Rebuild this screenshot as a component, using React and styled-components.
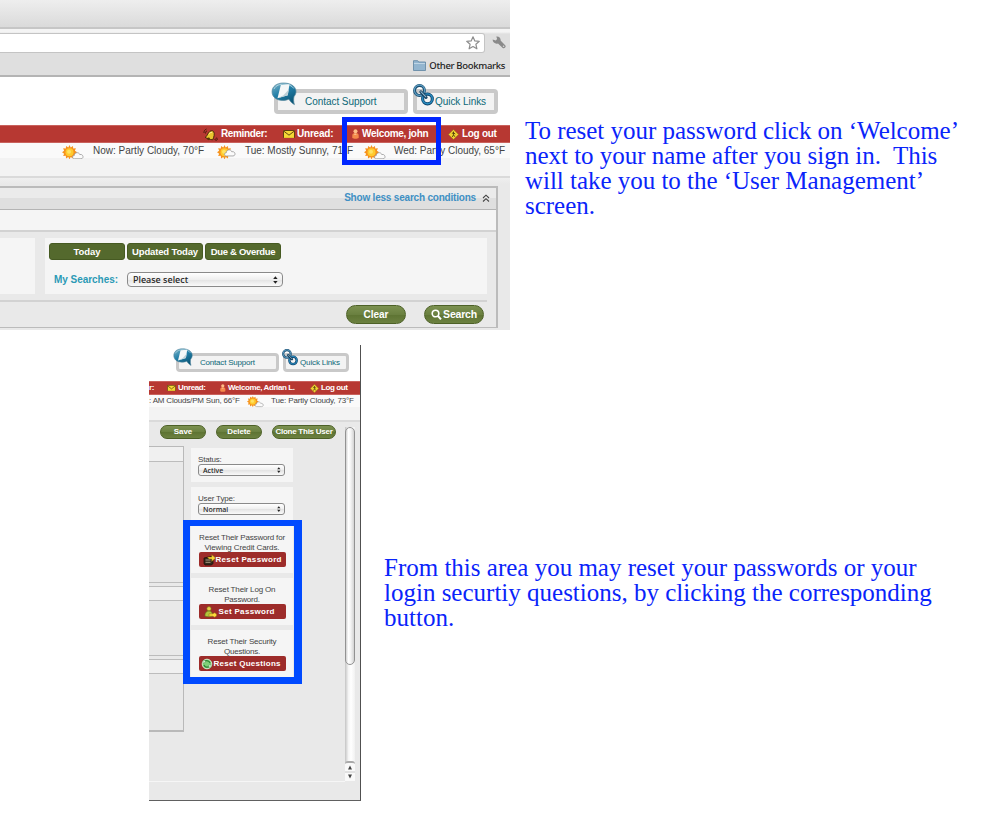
import React from "react";
import styled, { createGlobalStyle } from "styled-components";

const Global = createGlobalStyle`
  *, *::before, *::after { box-sizing: border-box; }
  body { margin: 0; background: #fff; }
  button { border: 0; padding: 0; margin: 0; font: inherit; }
`;

const Page = styled.main`
  width: 1000px;
  height: 816px;
  display: flex;
  flex-direction: column;
  gap: 15px;
  overflow: hidden;
  background: #fff;
  font-family: "Liberation Sans", Arial, sans-serif;
`;

const Step = styled.section`
  display: flex;
  align-items: flex-start;
  padding-left: ${(p) => p.$indent || 0}px;
`;

const Note = styled.p`
  margin: ${(p) => p.$top}px 0 0 ${(p) => p.$left}px;
  font: 25px/25px "Liberation Serif", "Times New Roman", serif;
  letter-spacing: ${(p) => p.$track || 0}px;
  color: #0a24fa;
  white-space: pre;
`;

const Text = styled.span`
  font-size: ${(p) => p.$size || 10}px;
  letter-spacing: ${(p) => p.$track || 0}px;
  font-weight: ${(p) => (p.$bold ? 700 : 400)};
  line-height: 1;
  white-space: nowrap;
`;

/* Screenshot frames */
const BrowserShot = styled.div`
  position: relative;
  flex: none;
  width: 510px;
  height: 330px;
  display: flex;
  flex-direction: column;
  overflow: hidden;
  background: #e9e9e9;
`;

const UserShot = styled.div`
  position: relative;
  flex: none;
  width: 212px;
  height: 456px;
  display: flex;
  flex-direction: column;
  overflow: hidden;
  background: #e9e9e9;
  border-right: 1px solid #505050;
  border-bottom: 1px solid #606060;
`;

const Highlight = styled.div`
  position: absolute;
  left: ${(p) => p.$x}px;
  top: ${(p) => p.$y}px;
  width: ${(p) => p.$w}px;
  height: ${(p) => p.$h}px;
  border-style: solid;
  border-color: ${(p) => p.$color};
  border-width: ${(p) => p.$border};
`;

/* Browser chrome */
const TabStrip = styled.div`
  flex: none;
  height: 29px;
  background: linear-gradient(#eeeeee, #dadada);
  border-bottom: 2px solid #c6c6c6;
`;

const Toolbar = styled.div`
  flex: none;
  height: 24px;
  display: flex;
  align-items: center;
  padding: 4px 4px 0 0;
  gap: 7px;
  background: linear-gradient(#f4f4f4 3px, #dfdfdf 5px);
`;

const AddressField = styled.div`
  width: 485px;
  height: 20px;
  display: flex;
  align-items: center;
  justify-content: flex-end;
  padding-right: 4px;
  background: #fff;
  border: solid #c4c4c4;
  border-width: 1px 1px 1px 0;
  border-radius: 0 3px 3px 0;
`;

const BookmarksBar = styled.div`
  flex: none;
  height: 24px;
  display: flex;
  align-items: center;
  justify-content: flex-end;
  gap: 3px;
  padding: 3px 5px 0 0;
  background: #dfdfdf;
  border-bottom: 2px solid #b4b4b4;
  color: #222;
  span { font-family: "Noto Sans", sans-serif; font-weight: 500; }
`;

/* Support header */
const SupportHeader = styled.header`
  flex: none;
  height: ${(p) => (p.$small ? 36 : 48)}px;
  display: flex;
  gap: ${(p) => (p.$small ? 4 : 5)}px;
  padding: ${(p) => (p.$small ? "8px 0 0 27px" : "12px 0 0 274px")};
  background: #fff;
`;

const SupportButton = styled.button`
  position: relative;
  width: ${(p) => p.$w}px;
  height: ${(p) => (p.$small ? 19 : 25)}px;
  display: flex;
  align-items: center;
  padding-left: ${(p) => p.$pad}px;
  background: #f3f3f3;
  border: ${(p) => (p.$small ? 3 : 4)}px solid #c9c9c9;
  border-radius: 4px;
  color: #0c6877;
`;

const Badge = styled.span`
  position: absolute;
  left: ${(p) => p.$x}px;
  top: ${(p) => p.$y}px;
  line-height: 0;
`;

/* Red account navigation and the weather strip beneath it */
const AccountBar = styled.nav`
  flex: none;
  height: ${(p) => (p.$small ? 14 : 18)}px;
  display: grid;
  grid-template-columns: ${(p) => p.$cols};
  align-items: center;
  background: #b73832;
  border: solid #c9625d;
  border-width: 1px 0;
  color: #fff;
`;

const NavItem = styled.div`
  display: grid;
  grid-template-columns: ${(p) => p.$icon}px auto;
  align-items: center;
  justify-content: start;
`;

const WeatherBar = styled.div`
  flex: none;
  height: ${(p) => (p.$small ? 27 : 35)}px;
  display: grid;
  grid-template-columns: ${(p) => p.$cols};
  align-items: start;
  padding-top: ${(p) => (p.$small ? 1 : 1.5)}px;
  background: linear-gradient(#fafafa ${(p) => (p.$small ? 12 : 15)}px, #f3f3f3 ${(p) => (p.$small ? 12 : 15)}px);
  border-bottom: 2px solid #dadada;
  color: #444;
  ${Text} { padding-top: 1px; }
`;

const Forecast = styled.div`
  display: grid;
  grid-template-columns: ${(p) => p.$icon}px auto;
  align-items: start;
  justify-content: start;
`;

/* Search panel */
const Workspace = styled.div`
  flex: 1;
  padding: 8px 12px 0 0;
  background: linear-gradient(#efefef, #e9e9e9 6px);
`;

const SearchPanel = styled.div`
  height: 142px;
  display: flex;
  flex-direction: column;
  border: solid #bbb;
  border-width: 2px 2px 1px 0;
  background: #e9e9e9;
`;

const PanelHead = styled.div`
  height: 22px;
  display: flex;
  align-items: center;
  justify-content: flex-end;
  gap: 6px;
  padding: 0 6px 1px 0;
  background: linear-gradient(#ebebeb 50%, #dfdfdf 50%);
  border-bottom: 1px solid #b4b4b4;
  color: #4090c4;
`;

const PanelStrip = styled.div`
  height: 22px;
  background: #f5f5f5;
  border-bottom: 2px solid #d2d2d2;
`;

const PanelBody = styled.div`
  height: 70px;
  display: flex;
  gap: 10px;
  padding: 6px 0 6px 0;
  border-bottom: 2px solid #d2d2d2;
  margin-right: 9px;
`;

const FilterSide = styled.div`
  width: 35px;
  background: #f5f5f5;
`;

const FilterMain = styled.div`
  flex: 1;
  display: flex;
  flex-direction: column;
  gap: 12px;
  padding: 5px 0 0 4px;
  background: #f5f5f5;
`;

const FilterRow = styled.div`
  display: flex;
  align-items: center;
  gap: 2px;
`;

const FilterTab = styled.button`
  width: 76px;
  height: 17px;
  display: flex;
  align-items: center;
  justify-content: center;
  background: #54692d;
  border: 1px solid #465a22;
  border-radius: 3px;
  color: #fff;
`;

const FieldLabel = styled.label`
  width: 76px;
  display: flex;
  padding-left: 5px;
  color: #2b9ab5;
`;

const Select = styled.div`
  width: ${(p) => p.$w}px;
  height: ${(p) => (p.$small ? 12 : 15)}px;
  display: flex;
  align-items: center;
  justify-content: space-between;
  padding: 0 ${(p) => (p.$small ? 3 : 4)}px 0 ${(p) => (p.$small ? 4 : 5)}px;
  background: linear-gradient(#fff, #efefef 50%, #e2e2e2 50%, #fafafa);
  border: 1px solid #8a8a8a;
  border-radius: ${(p) => (p.$small ? 3 : 4)}px;
  color: #222;
  ${Text} { font-family: "Noto Sans", sans-serif; font-weight: 500; }
`;

const PanelFooter = styled.div`
  flex: 1;
  display: flex;
  justify-content: flex-end;
  gap: 18px;
  padding: 3px 12px 0 0;
`;

const Pill = styled.button`
  width: ${(p) => p.$w}px;
  height: ${(p) => (p.$small ? 14 : 19)}px;
  display: flex;
  align-items: center;
  justify-content: center;
  gap: 1px;
  background: linear-gradient(#7c9150, #6a8040 50%, #5d7332 50%, #6c8141);
  border: ${(p) => (p.$small ? 1 : 1.5)}px solid #4d6127;
  border-radius: 10px;
  color: #fff;
`;

/* User management screen */
const Actions = styled.div`
  flex: none;
  height: 24px;
  display: flex;
  gap: 10px;
  padding: 3px 0 0 11px;
`;

const Content = styled.div`
  flex: 1;
  display: flex;
`;

const UserMain = styled.div`
  width: 196px;
  height: 336px;
  border-bottom: 1px solid #f6f6f6;
`;

const Columns = styled.div`
  display: flex;
  gap: 7px;
`;

const Sections = styled.div`
  width: 35px;
  height: 286px;
  border: solid #b9b9b9;
  border-width: 1px 1px 2px 0;
`;

const SectionBox = styled.div`
  height: ${(p) => p.$h}px;
  border-bottom: ${(p) => (p.$last ? 0 : 1)}px solid #bcbcbc;
  margin-bottom: 3px;
`;

const SectionHead = styled.div`
  height: ${(p) => p.$h}px;
  background: #f0f0f0;
  border: solid #bcbcbc;
  border-width: ${(p) => (p.$first ? 0 : 1)}px 0 1px;
`;

const Cards = styled.div`
  width: 102px;
  display: flex;
  flex-direction: column;
  gap: 5px;
  padding-top: 2px;
`;

const FieldCard = styled.div`
  height: 34px;
  display: flex;
  flex-direction: column;
  padding: 8px 0 0 7px;
  background: #f5f5f5;
  color: #444;
`;

const ResetCard = styled.div`
  height: 47px;
  display: flex;
  flex-direction: column;
  align-items: center;
  gap: 2px;
  padding-top: 8px;
  background: #f5f5f5;
  color: #444;
`;

const ResetButton = styled.button`
  width: 87px;
  height: 15px;
  display: flex;
  align-items: center;
  gap: ${(p) => p.$gap}px;
  padding-left: ${(p) => p.$pad}px;
  margin-top: -2px;
  background: #9d2c2a;
  border-radius: 2px;
  color: #fff;
  svg { flex: none; }
`;

const ScrollTrack = styled.div`
  width: 10px;
  height: 354px;
  display: flex;
  flex-direction: column;
  background: linear-gradient(90deg, #c4c4c4, #f5f5f5 35%, #fff 60%, #f1f1f1);
  margin-top: -19px;
`;

const ScrollThumb = styled.div`
  height: 238px;
  background: linear-gradient(90deg, #d0d0d0, #fff 30%, #f4f4f4 60%, #d2d2d2);
  border: 1px solid #929292;
  border-radius: 5px;
`;

const ScrollArrows = styled.div`
  margin-top: auto;
  height: 20px;
  background: #f9f9f9;
  border-top: 2px solid #aaa;
  border-radius: 3px 3px 0 0;
  line-height: 0;
`;

/* Icons */
const ChatIcon = ({ size }) => (
  <svg width={size} height={size * 0.92} viewBox="0 0 26 24">
    <defs>
      <linearGradient id="chat" x1="0" y1="0" x2="0.6" y2="1">
        <stop offset="0" stopColor="#7eb6c9" /><stop offset="0.5" stopColor="#237fa8" /><stop offset="1" stopColor="#0c5879" />
      </linearGradient>
    </defs>
    <path d="M12.500 1C5.500 1 1 4.500 1 9.800c0 5.400 4.500 8.700 10.500 8.700 2.300 0 4.600-.3 6.400-1.200 1.400 2 3 4.200 5.600 5.400-1-2.600-1-5.400-.5-8 1.500-2 2.300-3.700 2-6C24.300 3.800 19 1 12.500 1z" fill="url(#chat)" stroke="#51849b" strokeWidth=".7" />
    <path d="M3 7C5 3 9 2.200 13 2.200s8 1.300 9.800 4.300" fill="none" stroke="#c6dfe7" strokeWidth="1" opacity=".8" />
    <path d="M9.800 3l8.700-.8-1.700 11-10.300 3z" fill="#f4f7f8" />
    <path d="M17.700 7.500l-.9 5.700-10.300 3 6-2.800z" fill="#bccfd7" />
  </svg>
);

const LinkIcon = ({ size }) => (
  <svg width={size} height={size * 1.05} viewBox="0 0 20 21" fill="none">
    <circle cx="6.200" cy="6.200" r="4.700" stroke="#174c70" strokeWidth="2.800" />
    <circle cx="6.200" cy="6" r="4.900" stroke="#5d9dc1" strokeWidth="1.200" />
    <circle cx="13.800" cy="14.300" r="4.600" stroke="#0f4770" strokeWidth="3" />
    <circle cx="13.800" cy="14.100" r="4.700" stroke="#2a8dc0" strokeWidth="1.300" />
    <path d="M7.500 7.500l5 5.300" stroke="#153f5e" strokeWidth="2.800" strokeLinecap="round" />
    <path d="M7.500 7.200l4.800 5" stroke="#8fb9d0" strokeWidth="1" strokeLinecap="round" />
  </svg>
);

const StarIcon = () => (
  <svg width="14" height="14" viewBox="0 0 14 14">
    <path d="M7 .8l1.800 4.100 4.500.4-3.400 3 1 4.500L7 10.500l-3.900 2.300 1-4.500L.7 5.300l4.500-.4z" fill="#fff" stroke="#8d8d8d" strokeWidth="1.200" strokeLinejoin="round" />
  </svg>
);

const WrenchIcon = () => (
  <svg width="14" height="14" viewBox="0 0 14 14">
    <path d="M.6 3.600l3.200 1 1.300-1.500L4.300.6C7.200.2 8.900 2.300 8.600 4.600l4.800 4.800c1 1.700-1 3.600-2.700 2.500L6 7.400C3.800 8.300.6 6.800.6 3.600z" fill="#8a8a8a" />
    <circle cx="11.600" cy="10.300" r=".8" fill="#ddd" />
  </svg>
);

const FolderIcon = () => (
  <svg width="13" height="11" viewBox="0 0 13 11">
    <path d="M.5 2V.7h4.200L5.700 2h6.800v8.500H.5z" fill="#93b5cf" stroke="#688ba7" strokeWidth=".9" />
    <path d="M1 3.500h11" stroke="#bfd5e5" />
  </svg>
);

const BellIcon = () => (
  <svg width="15" height="13" viewBox="0 0 15 13">
    <path d="M1 5C.8 3 1.800 1.600 3.500 1M2.500 5.500c0-1.300.5-2.200 1.500-2.800M11.500 11.500c1.200 0 2-.8 2.200-2M12.500 12.600c1.300-.3 2.100-1 2.300-2.200" stroke="#3d1708" strokeWidth=".9" fill="none" />
    <path d="M10.500 3.500c1.500 2 .4 5.800-.8 8.300-2.800-.2-5.800-1.300-7.500-2.500C4 8.500 4.200 6.500 5.500 4.800 7 2.800 9 2 10.500 3.500z" fill="#eac62f" stroke="#3b2107" strokeWidth=".9" />
    <path d="M6 6.200c.8-1.500 2-2 3-1.700" stroke="#fff6a0" strokeWidth="1" fill="none" />
    <circle cx="5.500" cy="10.800" r="1.400" fill="#5a3208" />
  </svg>
);

const MailIcon = ({ w }) => (
  <svg width={w} height={w * 0.74} viewBox="0 0 12 8.900">
    <rect x=".5" y=".5" width="11" height="7.900" rx=".6" fill="#f5d735" stroke="#51360d" strokeWidth=".9" />
    <path d="M1 1.300l5 3.900 5-3.900" fill="none" stroke="#51360d" strokeWidth=".9" />
  </svg>
);

const PersonIcon = ({ h }) => (
  <svg width={h * 0.7} height={h} viewBox="0 0 7 10">
    <circle cx="3.500" cy="2.300" r="2" fill="#ffbe86" />
    <path d="M.3 9V6.500C.3 4.700 1.700 4 3.500 4s3.200.7 3.200 2.500V9c-1.500 1-5 1-6.400 0z" fill="#f58a4b" />
    <path d="M2.200 5.200h2.200" stroke="#ffd0a4" />
  </svg>
);

const ExitIcon = ({ size }) => (
  <svg width={size} height={size} viewBox="0 0 11 11">
    <path d="M5.500.4l5.100 5.100-5.100 5.100L.4 5.500z" fill="#f0d032" stroke="#8a6d18" strokeWidth=".5" />
    <path d="M5.500 2.600v3.200L4.300 8M5.500 5.800l1.400 2M3.900 4.400l1.600-.6 1.700 1.200" stroke="#3b2d08" strokeWidth=".8" fill="none" />
  </svg>
);

const SunIcon = ({ w, mostly }) => (
  <svg width={w} height={w * 0.68} viewBox="0 0 22 15">
    <path d="M7.500 0l1.200 2.400L11 .9l.2 2.700 2.700-.3-1 2.500 2.300 1.400-2.300 1.500 1 2.400-2.700-.2-.2 2.700-2.300-1.500L7.500 14.500l-1.200-2.400L4 13.600l-.2-2.700-2.700.2 1-2.400L0 7.200l2.100-1.400-1-2.500 2.700.3L4 .9l2.300 1.500z" fill="#f6931e" />
    <circle cx="7.500" cy="7.200" r="4" fill="#ffcb2e" />
    <circle cx="7" cy="6.700" r="2" fill="#ffe264" />
    <path transform={mostly ? "translate(-3 -2.500)" : "translate(0 .3)"} d="M12.500 13.500c-2.500 0-2.500-3.300-.2-3.300.2-3.300 4.600-3.800 5.400-1 3.800-.8 4.600 4.300 1.300 4.300z" fill="#fbfbfb" stroke="#999" strokeWidth=".8" />
  </svg>
);

const ChevronsUp = () => (
  <svg width="8" height="8" viewBox="0 0 8 8" fill="none" stroke="#444" strokeWidth="1.100">
    <path d="M1 4l3-2.800L7 4M1 7.500l3-2.800 3 2.800" />
  </svg>
);

const SelectArrows = ({ h }) => (
  <svg width={h * 0.6} height={h} viewBox="0 0 5 8"><path d="M2.500 0L4.800 3H.2zM2.500 8L.2 5h4.600z" fill="#222" /></svg>
);

const SearchIcon = () => (
  <svg width="11" height="11" viewBox="0 0 11 11" fill="none" stroke="#fff">
    <circle cx="4.500" cy="4.500" r="3.300" strokeWidth="1.600" /><path d="M7 7l3 3.300" strokeWidth="2" />
  </svg>
);

const CardKeyIcon = () => (
  <svg width="13" height="12" viewBox="0 0 13 12">
    <path d="M1 4l7-1.500 2 1.500v5.500L8.500 11H2L1 9.500z" fill="#33281b" stroke="#160c06" strokeWidth=".7" />
    <path d="M2.500 6h5M2.500 8.300h5" stroke="#b7a98e" strokeWidth=".9" />
    <path d="M4.500 3h4.200V.6l4 3.500-4 3.400V5H6z" fill="#f8d83a" stroke="#7a560b" strokeWidth=".5" />
  </svg>
);

const UserKeyIcon = () => (
  <svg width="13" height="12" viewBox="0 0 13 12">
    <circle cx="5" cy="2.800" r="2.200" fill="#e7cf49" stroke="#6d6914" strokeWidth=".6" />
    <path d="M.8 10C.8 6.500 2.500 5 5 5s3.700 1.500 3.700 5c-2 1-6 1-7.900 0z" fill="#b4c43c" stroke="#5a6b15" strokeWidth=".6" />
    <path d="M5 7.800h4a2 2 0 110 2.400H5z" fill="#ffdc3d" stroke="#8b6b12" strokeWidth=".5" />
  </svg>
);

const RefreshIcon = () => (
  <svg width="12" height="12" viewBox="0 0 12 12">
    <circle cx="6" cy="6" r="4.800" fill="#7fcf78" stroke="#d2eecd" strokeWidth="1" />
    <path d="M3 7a3.200 3.200 0 005.500 1M9 5a3.200 3.200 0 00-5.500-1.200" stroke="#2d8538" strokeWidth="1.300" fill="none" />
    <path d="M9.800 6.200L10 10 7 8zM2.200 5.500L2 2l3 1.500z" fill="#e9f9e4" stroke="#3b8d41" strokeWidth=".4" />
  </svg>
);

const ScrollGlyphs = () => (
  <svg width="10" height="18" viewBox="0 0 10 18">
    <path d="M5 2.500L7 6.500H3zM5 15.500L3 11.500h4z" fill="#444" /><path d="M0 9h10" stroke="#c8c8c8" />
  </svg>
);

function SupportButtons({ small }) {
  const size = small ? 8 : 10;
  return (
    <SupportHeader $small={small}>
      <SupportButton $small={small} $w={small ? 103 : 134} $pad={small ? 21 : 27}>
        <Badge $x={small ? -6 : -7} $y={small ? -8 : -11}><ChatIcon size={small ? 20 : 26} /></Badge>
        <Text $size={size} $track={small ? -0.2 : -0.05}>Contact Support</Text>
      </SupportButton>
      <SupportButton $small={small} $w={small ? 66 : 85} $pad={small ? 14 : 18}>
        <Badge $x={-4} $y={small ? -7 : -9}><LinkIcon size={small ? 16 : 21} /></Badge>
        <Text $size={size} $track={small ? -0.14 : -0.06}>Quick Links</Text>
      </SupportButton>
    </SupportHeader>
  );
}

function SearchScreen() {
  return (
    <BrowserShot>
      <TabStrip />
      <Toolbar>
        <AddressField><StarIcon /></AddressField>
        <WrenchIcon />
      </Toolbar>
      <BookmarksBar>
        <FolderIcon />
        <Text $size={9.5} $track={-0.32}>Other Bookmarks</Text>
      </BookmarksBar>
      <SupportButtons />
      <AccountBar $cols="203px 80px 69px 96px 1fr">
        <span />
        <NavItem $icon={18}><BellIcon /><Text $bold $track={-0.36}>Reminder:</Text></NavItem>
        <NavItem $icon={14}><MailIcon w={12} /><Text $bold $track={-0.2}>Unread:</Text></NavItem>
        <NavItem $icon={10}><PersonIcon h={10} /><Text $bold $track={-0.32}>Welcome, john</Text></NavItem>
        <NavItem $icon={14}><ExitIcon size={11} /><Text $bold $track={-0.3}>Log out</Text></NavItem>
      </AccountBar>
      <WeatherBar $cols="62px 155px 147px 1fr">
        <span />
        <Forecast $icon={31}><SunIcon w={22} /><Text>Now: Partly Cloudy, 70°F</Text></Forecast>
        <Forecast $icon={28}><SunIcon w={22} mostly /><Text $track={-0.02}>Tue: Mostly Sunny, 71°F</Text></Forecast>
        <Forecast $icon={30}><SunIcon w={22} /><Text $track={-0.02}>Wed: Partly Cloudy, 65°F</Text></Forecast>
      </WeatherBar>
      <Workspace>
        <SearchPanel>
          <PanelHead><Text $bold $track={-0.2}>Show less search conditions</Text><ChevronsUp /></PanelHead>
          <PanelStrip />
          <PanelBody>
            <FilterSide />
            <FilterMain>
              <FilterRow>
                <FilterTab><Text $bold $size={9.5} $track={-0.07}>Today</Text></FilterTab>
                <FilterTab><Text $bold $size={9.5} $track={-0.16}>Updated Today</Text></FilterTab>
                <FilterTab><Text $bold $size={9.5} $track={-0.3}>Due &amp; Overdue</Text></FilterTab>
              </FilterRow>
              <FilterRow>
                <FieldLabel><Text $bold $track={-0.04}>My Searches:</Text></FieldLabel>
                <Select $w={156}><Text $size={9}>Please select</Text><SelectArrows h={8} /></Select>
              </FilterRow>
            </FilterMain>
          </PanelBody>
          <PanelFooter>
            <Pill $w={60}><Text $bold>Clear</Text></Pill>
            <Pill $w={60}><SearchIcon /><Text $bold $size={10.5} $track={-0.2}>Search</Text></Pill>
          </PanelFooter>
        </SearchPanel>
      </Workspace>
      <Highlight $x={342} $y={117} $w={99} $h={48} $border="5px" $color="#0026ff" />
    </BrowserShot>
  );
}

function UserScreen() {
  return (
    <UserShot>
      <SupportButtons small />
      <AccountBar $small $cols="18px 53px 90px 1fr">
        <Text $bold $size={8} $track={-0.3}>r:</Text>
        <NavItem $icon={11}><MailIcon w={9} /><Text $bold $size={8} $track={-0.37}>Unread:</Text></NavItem>
        <NavItem $icon={8}><PersonIcon h={8} /><Text $bold $size={8} $track={-0.4}>Welcome, Adrian L.</Text></NavItem>
        <NavItem $icon={11}><ExitIcon size={9} /><Text $bold $size={8} $track={-0.39}>Log out</Text></NavItem>
      </AccountBar>
      <WeatherBar $small $cols="98px 1fr">
        <Text $size={8} $track={-0.185}>: AM Clouds/PM Sun, 66°F</Text>
        <Forecast $icon={24}><SunIcon w={17} /><Text $size={8} $track={-0.145}>Tue: Partly Cloudy, 73°F</Text></Forecast>
      </WeatherBar>
      <Actions>
        <Pill $small $w={46}><Text $bold $size={8} $track={-0.1}>Save</Text></Pill>
        <Pill $small $w={46}><Text $bold $size={8} $track={-0.1}>Delete</Text></Pill>
        <Pill $small $w={64}><Text $bold $size={8} $track={-0.25}>Clone This User</Text></Pill>
      </Actions>
      <Content>
        <UserMain>
          <Columns>
            <Sections>
              <SectionBox $h={136}><SectionHead $first $h={15} /></SectionBox>
              <SectionBox $h={70}><SectionHead $h={15} /></SectionBox>
              <SectionBox $h={60} $last><SectionHead $h={15} /></SectionBox>
            </Sections>
            <Cards>
              <FieldCard>
                <Text $size={8} $track={-0.2}>Status:</Text>
                <Select $small $w={87}><Text $size={7}>Active</Text><SelectArrows h={6} /></Select>
              </FieldCard>
              <FieldCard>
                <Text $size={8} $track={-0.17}>User Type:</Text>
                <Select $small $w={87}><Text $size={7}>Normal</Text><SelectArrows h={6} /></Select>
              </FieldCard>
              <ResetCard>
                <Text $size={8} $track={-0.18}>Reset Their Password for</Text>
                <Text $size={8} $track={-0.11}>Viewing Credit Cards.</Text>
                <ResetButton $pad={4} $gap={0}><CardKeyIcon /><Text $bold $size={8} $track={0.32}>Reset Password</Text></ResetButton>
              </ResetCard>
              <ResetCard>
                <Text $size={8} $track={-0.16}>Reset Their Log On</Text>
                <Text $size={8} $track={-0.2}>Password.</Text>
                <ResetButton $pad={5} $gap={2}><UserKeyIcon /><Text $bold $size={8} $track={0.32}>Set Password</Text></ResetButton>
              </ResetCard>
              <ResetCard>
                <Text $size={8} $track={-0.175}>Reset Their Security</Text>
                <Text $size={8} $track={-0.2}>Questions.</Text>
                <ResetButton $pad={2} $gap={1}><RefreshIcon /><Text $bold $size={8} $track={0.276}>Reset Questions</Text></ResetButton>
              </ResetCard>
            </Cards>
          </Columns>
        </UserMain>
        <ScrollTrack>
          <ScrollThumb />
          <ScrollArrows><ScrollGlyphs /></ScrollArrows>
        </ScrollTrack>
      </Content>
      <Highlight $x={34} $y={175} $w={119} $h={164} $border="6px 8px 7px 7px" $color="#004aff" />
    </UserShot>
  );
}

export default function App() {
  return (
    <Page>
      <Global />
      <Step>
        <SearchScreen />
        <Note $top={118} $left={15} $track={-0.025}>{"To reset your password click on ‘Welcome’\nnext to your name after you sign in.  This\nwill take you to the ‘User Management’\nscreen."}</Note>
      </Step>
      <Step $indent={149}>
        <UserScreen />
        <Note $top={210} $left={23}>{"From this area you may reset your passwords or your\nlogin securtiy questions, by clicking the corresponding\nbutton."}</Note>
      </Step>
    </Page>
  );
}
